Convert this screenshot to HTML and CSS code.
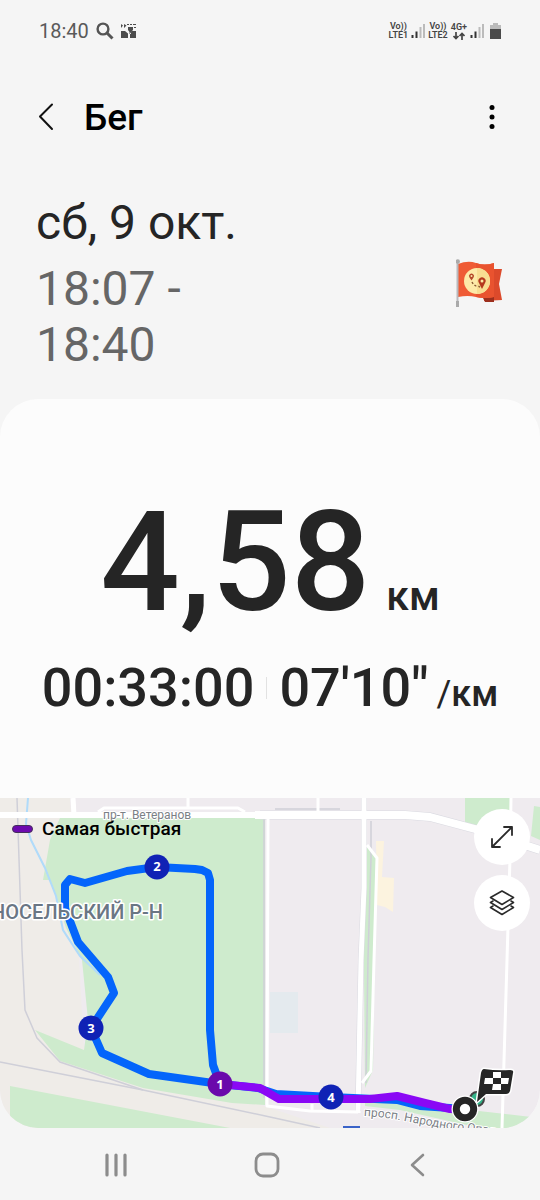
FILE: index.html
```html
<!DOCTYPE html>
<html lang="ru">
<head>
  <meta charset="UTF-8" />
  <meta name="viewport" content="width=device-width, initial-scale=1.0" />
  <title>Бег</title>
  <link rel="stylesheet" href="styles.css">
</head>
<body>
  <div class="status-bar">
    <div class="status-left">
      <span class="clock">18:40</span>
      <svg width="18" height="18" viewBox="0 0 18 18" fill="none" stroke="#555" stroke-width="2.4">
        <circle cx="7" cy="7" r="5.4" />
        <path d="M11 11l5.5 5.5" stroke-width="3" />
      </svg>
      <svg width="15" height="16" viewBox="0 0 15 16" fill="#4c4c4c">
        <path d="M0 1l2 1.500L0 5zM3 1l2.500 1.500L3 5zM6 1h2v1H6zM9 1h2v1H9zM12 1h3v1h-3zM13 4h2v1h-2z" />
        <path d="M0 8h4l3 2.500V15H0zM15 8h-4l-2 2.500V15h6zM7 4h5v3l-2 2v2H8.500V9L7 7z" />
      </svg>
    </div>
    <div class="status-right">
      <span class="net">Vo))<br>LTE1</span>
      <svg class="signal" width="14" height="16" viewBox="0 0 14 16">
        <path d="M1.500 12v3M5.500 8.500V15" stroke="#333" stroke-width="2" />
        <path d="M9.500 4v11M13 1v14" stroke="#bbb" stroke-width="2" />
      </svg>
      <span class="net">Vo))<br>LTE2</span>
      <span class="net data">4G+
        <svg width="12" height="8" viewBox="0 0 12 8" fill="none" stroke="#444" stroke-width="1.700">
          <path d="M3 0v6M.5 4L3 6.500 5.500 4M9 8V2M6.500 4L9 1.500 11.500 4" />
        </svg>
      </span>
      <svg class="signal" width="14" height="16" viewBox="0 0 14 16">
        <path d="M1.500 12v3M5.500 8.500V15" stroke="#333" stroke-width="2" />
        <path d="M9.500 4v11M13 1v14" stroke="#bbb" stroke-width="2" />
      </svg>
      <svg class="battery" width="11" height="17" viewBox="0 0 11 17">
        <path d="M3 0h5v2h3v5H0V2h3z" fill="#bbb" />
        <path d="M0 6h11v10H0z" fill="#4a4a4a" />
      </svg>
    </div>
  </div>

  <header class="app-bar">
    <button class="icon-btn" aria-label="Назад">
      <svg width="16" height="28" viewBox="0 0 16 28" fill="none" stroke="#111" stroke-width="2" stroke-linecap="round" stroke-linejoin="round">
        <path d="M14 1.500L2 13.500l12 12.500" />
      </svg>
    </button>
    <h1>Бег</h1>
    <button class="icon-btn more" aria-label="Ещё">
      <svg width="6" height="24" viewBox="0 0 6 24">
        <circle cx="3" cy="2.600" r="2.500" />
        <circle cx="3" cy="12" r="2.500" />
        <circle cx="3" cy="21.400" r="2.500" />
      </svg>
    </button>
  </header>

  <section class="when">
    <div>
      <p class="date">сб, 9 окт.</p>
      <p class="range">18:07 -<br>18:40</p>
    </div>
    <svg class="flag" width="48" height="50" viewBox="0 0 48 50">
      <path d="M28 10h18l-3 15 3 16-18 1z" fill="#dc4a2b" />
      <path d="M27 39l11-1v5l-9 0z" fill="#9c2f1d" />
      <path d="M2 5q10-4 18-1t18 0v34q-10 2-18 0T2 38z" fill="#ef5b35" />
      <path d="M20 4q9 3 18 0v34q-10 2-18 0z" fill="#e9532f" />
      <circle cx="21" cy="22" r="13" fill="#fdeaa8" />
      <path d="M21 9a13 13 0 0 1 0 26z" fill="#f8dd92" />
      <path d="M16 23q2 4 5 4t4 3" fill="none" stroke="#8a5a32" stroke-width="1.500" stroke-dasharray="2 2" />
      <path d="M15.500 21.500l-2-3a2.500 2.500 0 1 1 4 0z" fill="#b5482a" />
      <circle cx="15.500" cy="17" r="1" fill="#fdeaa8" />
      <path d="M26 30l-3-6a3.600 3.600 0 1 1 6 0z" fill="#b5391f" />
      <circle cx="26" cy="22" r="1.500" fill="#fdeaa8" />
      <path d="M1.500 3v44" stroke="#b9b9bd" stroke-width="2" />
      <circle cx="1.800" cy="2.500" r="2.200" fill="#aaa" />
      <path d="M0 42h3v6H0z" fill="#aaa" />
    </svg>
  </section>

  <main class="card">
    <div class="metrics">
      <div class="distance"><span class="value">4,58</span><span class="unit">км</span></div>
      <div class="details">
        <span class="time">00:33:00</span>
        <span class="divider"></span>
        <span class="pace">07'10"<span class="pace-unit"><span class="slash">/</span>км</span></span>
      </div>
    </div>

    <div class="map">
      <svg class="map-canvas" viewBox="0 0 540 330">
        <defs>
          <path id="street" d="M364 318Q385 319 410 324T455 332L550 343" />
        </defs>
        <rect width="540" height="330" fill="#efebef" />
        <path d="M0 0H70L84 250 35 232 270 310 330 330H0z" fill="#efece8" />

        <!-- парки -->
        <g fill="#ceebcd">
          <path d="M68 20H265V307L232 305 143 290 60 263 35 232 84 252 88 222 82 162 66 130 56 98 50 82H43L50 42 60 20z" />
          <path d="M10 288L230 330H10z" />
          <path d="M367 48L376 60 373 272 365 290 363 48z" />
          <path d="M365 303H390L540 320V330H480L400 312 365 308z" />
          <path d="M465 0H510V36L465 25z" />
          <path d="M534 8L540 9V42L531 38z" />
        </g>
        <path d="M376 43H384L382 79 394 80 393 114 385 109 377 107z" fill="#fcf3df" />
        <path d="M270 194H298V235H270z" fill="#e4eaee" />
        <path d="M28 0L26 26 31 42 45 70 56 98 63 132 80 158 100 177" fill="none" stroke="#b0dbfa" stroke-width="2" />

        <!-- железная дорога -->
        <g fill="none" stroke="#cfcfd8" stroke-width="1.500">
          <path d="M17 0L22 152 25 212 37 240 60 264 143 292" />
          <path d="M0 264L143 292 270 319 320 330" />
          <path d="M371 23V60L368 160 366 285" />
          <path d="M264 20V300M275 11H340" />
        </g>

        <!-- улицы -->
        <g fill="none" stroke="#dadae1">
          <path d="M260 17H405L430 19 475 31 540 52" stroke-width="9" />
          <path d="M364 0V90L361 162 358 313" stroke-width="6" />
        </g>
        <g fill="none" stroke="#fff" stroke-linejoin="round">
          <path d="M0 17H260" stroke-width="6" />
          <path d="M255 17H405L430 19 475 31 540 52" stroke-width="8" />
          <path d="M364 0V90L361 162 358 315" stroke-width="5" />
          <path d="M73 0L74 17" stroke-width="5" />
          <path d="M98 14L104 10H238L245 14M188 0V10M318 0V14" stroke-width="3" />
          <path d="M268 20L267 308 310 313 358 314M312 306V313" stroke-width="3" />
          <path d="M367 47L377 60 374 162 371 273 362 285" stroke-width="3" />
          <path d="M511 0L510 60 507 162 502 330" stroke-width="3" />
        </g>
        <path d="M343 328H360V330H343z" fill="#3a63c8" />

        <text class="street-name" x="103" y="21">пр-т. Ветеранов</text>
        <text class="street-name"><textPath href="#street">просп. Народного Опол</textPath></text>

        <!-- маршрут -->
        <g fill="none" stroke-width="8" stroke-linejoin="round">
          <path d="M220 286L213 267 210 232V82L208 75 202 72 195 71 157 69 127 73 85 85 70 81 65 87V110L78 144 108 179 114 195 91 230 102 255 149 276 220 286 258 290 276 296 331 299 397 302 420 308 465 311" stroke="#0465fb" />
          <path d="M220 286L260 290 279 301H370L397 298 425 305 450 311 465 312" stroke="#8a08f5" />
        </g>
        <text class="district" x="163" y="121">НОСЕЛЬСКИЙ Р-Н</text>

        <g class="km-marks">
          <circle cx="157" cy="69" r="12.500" fill="#1022b5" />
          <circle cx="91" cy="230" r="12.500" fill="#1022b5" />
          <circle cx="331" cy="299" r="12.500" fill="#1022b5" />
          <circle cx="220" cy="286" r="12.500" fill="#6a09ab" />
          <text x="157" y="73">2</text>
          <text x="91" y="235">3</text>
          <text x="331" y="304">4</text>
          <text x="220" y="291">1</text>
        </g>

        <!-- старт и финиш -->
        <circle cx="477" cy="301" r="7" fill="#35b58a" stroke="#444" stroke-width="2" />
        <circle cx="465" cy="311" r="13.500" fill="#fff" />
        <circle cx="465" cy="311" r="8.700" fill="#fff" stroke="#262626" stroke-width="7" />
        <path d="M484 271Q497 273 510 272Q514 272 513 275L510 293Q509 296 506 296L486 296 477 304 481 275Q482 271 484 271z" fill="#262626" stroke="#fff" stroke-width="3" stroke-linejoin="round" paint-order="stroke" />
        <path d="M493 274H501V280H493zM485 280H493V286H484zM501 280H509L508 286H501zM493 286H501V292H492z" fill="#fff" />
      </svg>

      <div class="legend"><span class="swatch"></span>Самая быстрая</div>
      <div class="map-controls">
        <button class="round-btn" aria-label="Развернуть карту">
          <svg width="24" height="24" viewBox="0 0 24 24" fill="none" stroke="#2a2a2a" stroke-width="1.800" stroke-linecap="round" stroke-linejoin="round">
            <path d="M2 22L22 2M14 2h8v8M2 14v8h8" />
          </svg>
        </button>
        <button class="round-btn" aria-label="Слои">
          <svg width="26" height="26" viewBox="0 0 26 26" fill="none" stroke="#2a2a2a" stroke-width="1.600" stroke-linecap="round" stroke-linejoin="round">
            <path d="M13 1l11.500 6.500L13 14.500 1.500 7.500z" />
            <path d="M4 11l-2.500 1.500L13 19.500l11.500-7L22 11" />
            <path d="M4 16l-2.500 1.500L13 24.500l11.500-7L22 16" />
          </svg>
        </button>
      </div>
    </div>
  </main>

  <nav class="nav-bar">
    <button aria-label="Недавние">
      <svg width="24" height="26" viewBox="0 0 24 26" fill="none" stroke="#8c8c8c" stroke-width="3.200" stroke-linecap="round">
        <path d="M3 3v20M12 3v20M21 3v20" />
      </svg>
    </button>
    <button aria-label="Домой">
      <svg width="26" height="26" viewBox="0 0 26 26" fill="none" stroke="#8c8c8c" stroke-width="2.800">
        <rect x="2" y="2" width="22" height="22" rx="7" />
      </svg>
    </button>
    <button aria-label="Назад">
      <svg width="24" height="26" viewBox="0 0 24 26" fill="none" stroke="#8c8c8c" stroke-width="2.600" stroke-linecap="round" stroke-linejoin="round">
        <path d="M17 3L6 13l11 10" />
      </svg>
    </button>
  </nav>
</body>
</html>
```
FILE: styles.css
```css
:root {
  --bg: #f5f5f5;
  --card: #fcfcfc;
  --text: #252525;
  --muted: #666;
}

* {
  box-sizing: border-box;
}

body {
  margin: 0;
  min-height: 100vh;
  background-color: var(--bg);
  color: var(--text);
  font-family: Roboto, "Noto Sans", sans-serif;
  display: flex;
  flex-direction: column;
}

h1,
p {
  margin: 0;
}

svg {
  display: block;
}

button {
  border: 0;
  padding: 0;
  background: none;
  cursor: pointer;
  display: flex;
  align-items: center;
  justify-content: center;
}

.status-bar {
  height: 62px;
  padding: 0 39px;
  display: flex;
  align-items: center;
  justify-content: space-between;
}

.status-left {
  display: flex;
  align-items: center;
  gap: 7px;
}

.clock {
  font-size: 20px;
  color: #5a5a5a;
}

.status-right {
  display: flex;
  align-items: center;
  gap: 3px;
}

.net {
  font-size: 9px;
  line-height: 9px;
  font-weight: 600;
  color: #444;
  text-align: center;
}

.net svg {
  margin: 0 auto;
}

.battery {
  margin-left: 3px;
}

.app-bar {
  height: 110px;
  padding: 0 38px;
  display: flex;
  align-items: center;
}

.app-bar h1 {
  margin-left: 30px;
  font-size: 37px;
  font-weight: 500;
  color: #000;
}

.icon-btn {
  height: 40px;
}

.more {
  margin-left: auto;
  width: 20px;
}

.when {
  padding: 23px 36px 26px;
  display: flex;
  align-items: center;
  justify-content: space-between;
  font-size: 48px;
  line-height: 56px;
}

.range {
  margin-top: 10px;
  color: var(--muted);
}

.card {
  background-color: var(--card);
  border-radius: 38px;
  overflow: hidden;
}

.metrics {
  padding: 91px 20px 78px;
  font-weight: 500;
}

.distance {
  display: flex;
  justify-content: center;
  align-items: baseline;
  gap: 16px;
}

.value {
  font-size: 140px;
  line-height: 144px;
}

.unit {
  font-size: 41px;
  line-height: 1;
}

.details {
  margin-top: 22px;
  display: flex;
  justify-content: center;
  gap: 12px;
  font-size: 54px;
  line-height: 64px;
}

.divider {
  width: 1px;
  height: 22px;
  align-self: center;
  background-color: #e2e2e2;
}

.pace {
  display: flex;
  align-items: baseline;
  gap: 8px;
}

.pace-unit {
  font-size: 36px;
  line-height: 1;
}

.slash {
  font-weight: 400;
}

.map {
  position: relative;
}

.map-canvas {
  width: 100%;
  height: auto;
}

.street-name {
  font-size: 12px;
  fill: #7b8086;
  stroke: #fff;
  stroke-width: 2px;
  stroke-linejoin: round;
  paint-order: stroke;
}

.district {
  font-size: 20px;
  font-weight: 500;
  fill: #6a7684;
  text-anchor: end;
  stroke: #fff;
  stroke-width: 3px;
  stroke-linejoin: round;
  paint-order: stroke;
}

.km-marks text {
  font-family: "Noto Sans", sans-serif;
  font-size: 13px;
  font-weight: 700;
  fill: #fff;
  text-anchor: middle;
}

.legend {
  position: absolute;
  top: 19px;
  left: 12px;
  display: flex;
  align-items: center;
  gap: 9px;
  font-size: 19px;
  line-height: 24px;
  font-weight: 500;
  color: #000;
}

.swatch {
  width: 21px;
  height: 8px;
  border: 1px solid #45305c;
  border-radius: 4px;
  background-color: #6d0aae;
}

.map-controls {
  position: absolute;
  top: 11px;
  right: 10px;
  display: flex;
  flex-direction: column;
  gap: 10px;
}

.round-btn {
  width: 56px;
  height: 56px;
  border-radius: 50%;
  background-color: #fff;
}

.nav-bar {
  height: 72px;
  padding: 2px 47px 0 40px;
  display: flex;
  align-items: center;
}

.nav-bar button {
  flex: 1;
  height: 48px;
}
```
